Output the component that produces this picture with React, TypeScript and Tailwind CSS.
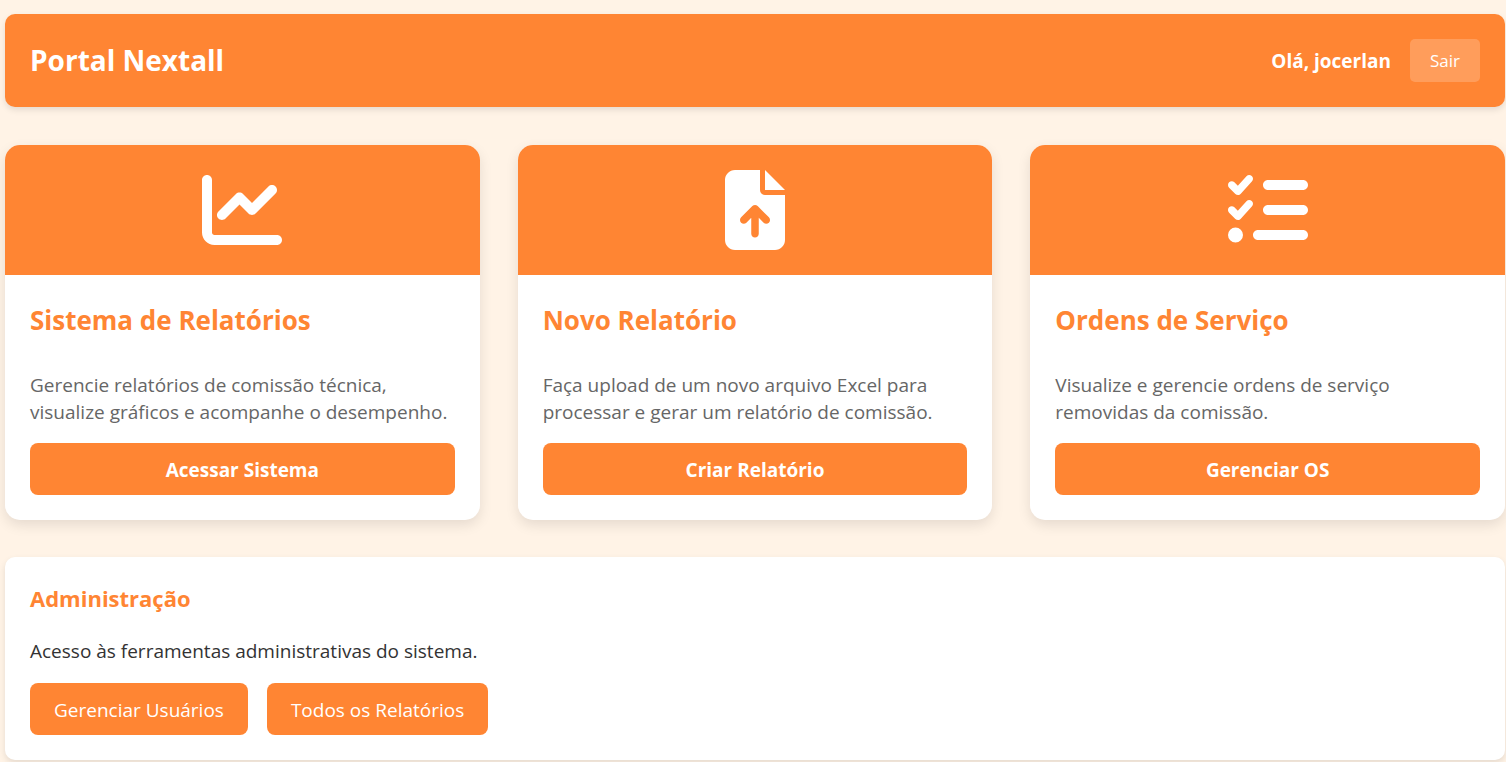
import type { IconType } from "react-icons";
import { FaChartLine, FaFileArrowUp, FaListCheck } from "react-icons/fa6";

type PortalCard = {
  title: string;
  description: string;
  action: string;
  Icon: IconType;
};

const cards: PortalCard[] = [
  {
    title: "Sistema de Relatórios",
    description:
      "Gerencie relatórios de comissão técnica, visualize gráficos e acompanhe o desempenho.",
    action: "Acessar Sistema",
    Icon: FaChartLine,
  },
  {
    title: "Novo Relatório",
    description:
      "Faça upload de um novo arquivo Excel para processar e gerar um relatório de comissão.",
    action: "Criar Relatório",
    Icon: FaFileArrowUp,
  },
  {
    title: "Ordens de Serviço",
    description: "Visualize e gerencie ordens de serviço removidas da comissão.",
    action: "Gerenciar OS",
    Icon: FaListCheck,
  },
];

function Card({ title, description, action, Icon }: PortalCard) {
  return (
    <article className="flex flex-col overflow-hidden rounded-[15px] bg-white shadow-[0_5px_13px_rgba(0,0,0,0.1)]">
      <div className="flex h-[130px] items-center justify-center bg-[#ff8533] text-white">
        <Icon size={80} aria-hidden="true" />
      </div>
      <div className="flex flex-1 flex-col p-[25px]">
        <h2 className="text-[26px] leading-[40px] font-bold text-[#ff8533]">{title}</h2>
        <p className="mt-8 mb-[17px] flex-1 text-[19px] leading-[27px] text-[#666666]">
          {description}
        </p>
        <a
          href="#"
          className="rounded-lg bg-[#ff8533] pt-[13px] pb-[11px] text-center font-bold text-white"
        >
          {action}
        </a>
      </div>
    </article>
  );
}

export default function App() {
  return (
    <div className="min-h-screen bg-[#fff3e6] pt-[14px] pr-px pb-[2px] pl-[5px] font-['Open_Sans',sans-serif] text-[19px] leading-7 text-[#333333]">
      <header className="flex items-center justify-between rounded-[10px] bg-[#ff8533] p-[25px] text-white shadow-[0_3px_6px_rgba(0,0,0,0.1)]">
        <h1 className="text-[28px] leading-[43px] font-bold">Portal Nextall</h1>
        <div className="flex items-center gap-[19px]">
          <span className="font-bold">Olá, jocerlan</span>
          <button
            type="button"
            className="h-[43px] rounded-[5px] bg-white/20 px-5 text-[17px]"
          >
            Sair
          </button>
        </div>
      </header>

      <main>
        <div className="mt-[38px] grid grid-cols-3 gap-[38px]">
          {cards.map((card) => (
            <Card key={card.title} {...card} />
          ))}
        </div>

        <section className="mt-[37px] rounded-[10px] bg-white p-[25px] shadow-[0_3px_6px_rgba(0,0,0,0.1)]">
          <h2 className="text-[22px] leading-8 font-bold text-[#ff8533]">Administração</h2>
          <p className="mt-[23px]">Acesso às ferramentas administrativas do sistema.</p>
          <div className="mt-[18px] flex gap-[19px]">
            <a href="#" className="rounded-lg bg-[#ff8533] px-6 pt-[13px] pb-[11px] text-white">
              Gerenciar Usuários
            </a>
            <a href="#" className="rounded-lg bg-[#ff8533] px-6 pt-[13px] pb-[11px] text-white">
              Todos os Relatórios
            </a>
          </div>
        </section>
      </main>
    </div>
  );
}
